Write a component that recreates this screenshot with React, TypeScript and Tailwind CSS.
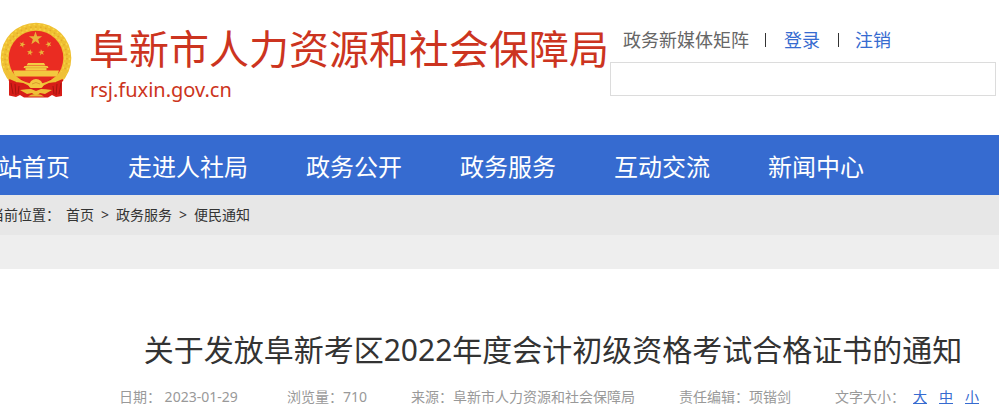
const navItems = ["网站首页", "走进人社局", "政务公开", "政务服务", "互动交流", "新闻中心"];

const fontSizes = ["大", "中", "小"];

function Star({ x, y, r, rotate = 0 }: { x: number; y: number; r: number; rotate?: number }) {
  return (
    <polygon
      transform={`translate(${x} ${y}) rotate(${rotate}) scale(${r})`}
      points="0,-1 .235,-.324 .951,-.309 .38,.124 .588,.809 0,.4 -.588,.809 -.38,.124 -.951,-.309 -.235,-.324"
      fill="#e9b23a"
    />
  );
}

function Emblem() {
  return (
    <svg viewBox="0 0 72 76" className="h-[76px] w-[72px] shrink-0" role="img" aria-label="国徽">
      {/* wheat ring */}
      <circle cx="36" cy="36" r="35.3" fill="#efc032" />
      <circle cx="36" cy="36" r="33.5" fill="none" stroke="#f8d648" strokeWidth="1.5" strokeDasharray="2 3" />
      <circle cx="36" cy="36" r="31" fill="none" stroke="#e2aa2a" strokeWidth="1.5" strokeDasharray="1.5 3.5" />
      <circle cx="36" cy="36" r="29" fill="none" stroke="#f6d046" strokeWidth="1.5" strokeDasharray="2 2.5" />
      <circle cx="36" cy="36" r="27.3" fill="#ea2c22" />
      {/* stars */}
      <Star x={35.5} y={16.5} r={7} />
      <Star x={22.3} y={22.5} r={3.3} rotate={20} />
      <Star x={48.6} y={22.3} r={3.3} rotate={-20} />
      <Star x={30} y={30.5} r={3.3} rotate={10} />
      <Star x={41.5} y={30.5} r={3.3} rotate={-10} />
      {/* gate */}
      <path d="M28 41h16l1.500 2.500H26.500zM24.500 44h23l1 2h-25zM25.500 46h21v2.500h-21z" fill="#f4cc42" />
      <path d="M25 45.800h22" stroke="#d79a2a" strokeWidth=".6" />
      <path d="M13 48.500h46l-2 6H15z" fill="#f3c83f" />
      {/* drapery */}
      <path d="M9 58l6 2 8-4 6 4h14l6-4 8 4 5-2v16l-6 1-4-2-4 2.500H24L20 73l-4 2-7-1.500z" fill="#d71d18" />
      <path d="M11 61l2 11M15 62l1 11M61 61l-2 11M57 62l-1 11M19 64l-1 8M53 64l1 8" stroke="#a5150f" strokeWidth="1" />
      <path d="M20 55h32l-6 6H26z" fill="#e32820" />
      {/* wheat stalks */}
      <path d="M4 48l8 2q7 9 20 12h8q13-3 20-12l8-2-5 9-7 4-8 1-7 4H31l-7-4-8-1-7-4z" fill="#efc036" />
      <path d="M9 58l7 3 7 1 6 3M63 58l-7 3-7 1-6 3" stroke="#d71d18" strokeWidth="2" fill="none" />
      {/* gear and bow */}
      <path d="M28 63q2-1.500 3-4 5-4 10 0 1 2.500 3 4l-3 3H31z" fill="#f3c93f" />
      <path d="M32 62q4-3 8 0" stroke="#d3932a" strokeWidth=".8" fill="none" />
      <path d="M20 68q7-1 11-1l5 2 5-2q4 0 11 1l-7 4-5-1-4 3-4-3-5 1z" fill="#efbf38" />
      <path d="M28 74.500q4-3 8-2 4-1 8 2z" fill="#e9b534" />
    </svg>
  );
}

export default function App() {
  return (
    <div className="overflow-hidden bg-white font-['Noto_Sans','Noto_Sans_CJK_SC',sans-serif] text-[#333]">
      {/* Header */}
      <header className="flex h-[135px] items-start pr-[3px] pt-[22px]">
        <Emblem />
        <div className="ml-[17px] shrink-0 text-[#cc3420]">
          <h1 className="font-['Noto_Sans_CJK_SC',sans-serif] text-[40px] leading-[50px]">阜新市人力资源和社会保障局</h1>
          <p className="pl-px text-[20px] leading-9">rsj.fuxin.gov.cn</p>
        </div>
        <div className="ml-px min-w-0 flex-1">
          <div className="flex h-10 items-start whitespace-nowrap pl-[13px] text-[18px] leading-9">
            <span className="text-[#666]">政务新媒体矩阵</span>
            <span className="ml-4 mr-[18px] mt-[11px] h-[14px] w-px bg-[#333]" />
            <a href="#login" className="text-[#366bd0]">登录</a>
            <span className="ml-[18px] mr-4 mt-[11px] h-[14px] w-px bg-[#333]" />
            <a href="#logout" className="text-[#366bd0]">注销</a>
          </div>
          <input type="text" aria-label="搜索" className="block h-[34px] w-full border border-[#dcdcdc] bg-white px-2 text-sm outline-none" />
        </div>
      </header>

      {/* Main nav */}
      <nav className="h-[60px] bg-[#366bd0]">
        <div className="-ml-[26px] flex gap-[58px] whitespace-nowrap text-2xl leading-[64px] text-white">
          {navItems.map((item) => (
            <a key={item} href="#nav">{item}</a>
          ))}
        </div>
      </nav>

      {/* Breadcrumb */}
      <div className="bg-[#e7e7e7]">
        <div className="-ml-[10px] flex h-10 items-center whitespace-nowrap text-sm">
          <span className="mr-[6px]">当前位置：</span>
          <a href="#home">首页</a>
          <span className="w-[22px] text-center">&gt;</span>
          <a href="#service">政务服务</a>
          <span className="w-[22px] text-center">&gt;</span>
          <a href="#notice">便民通知</a>
        </div>
      </div>
      <div className="h-[34px] bg-[#eee]" />

      {/* Article */}
      <main className="pl-[99px] pt-[59px]">
        <h2 className="whitespace-nowrap pl-2 text-center text-[30px] leading-[44px]">
          关于发放阜新考区2022年度会计初级资格考试合格证书的通知
        </h2>
        <div className="mt-[13px] flex justify-center gap-11 whitespace-nowrap text-sm leading-6 text-[#999]">
          <span className="min-w-[124px]">日期： 2023-01-29</span>
          <span>浏览量：710</span>
          <span>来源：阜新市人力资源和社会保障局</span>
          <span>责任编辑：项锴剑</span>
          <span className="flex">
            文字大小：
            <span className="ml-2 flex gap-3">
              {fontSizes.map((size) => (
                <a key={size} href="#size" className="text-[#366bd0] underline">{size}</a>
              ))}
            </span>
          </span>
        </div>
      </main>
    </div>
  );
}
